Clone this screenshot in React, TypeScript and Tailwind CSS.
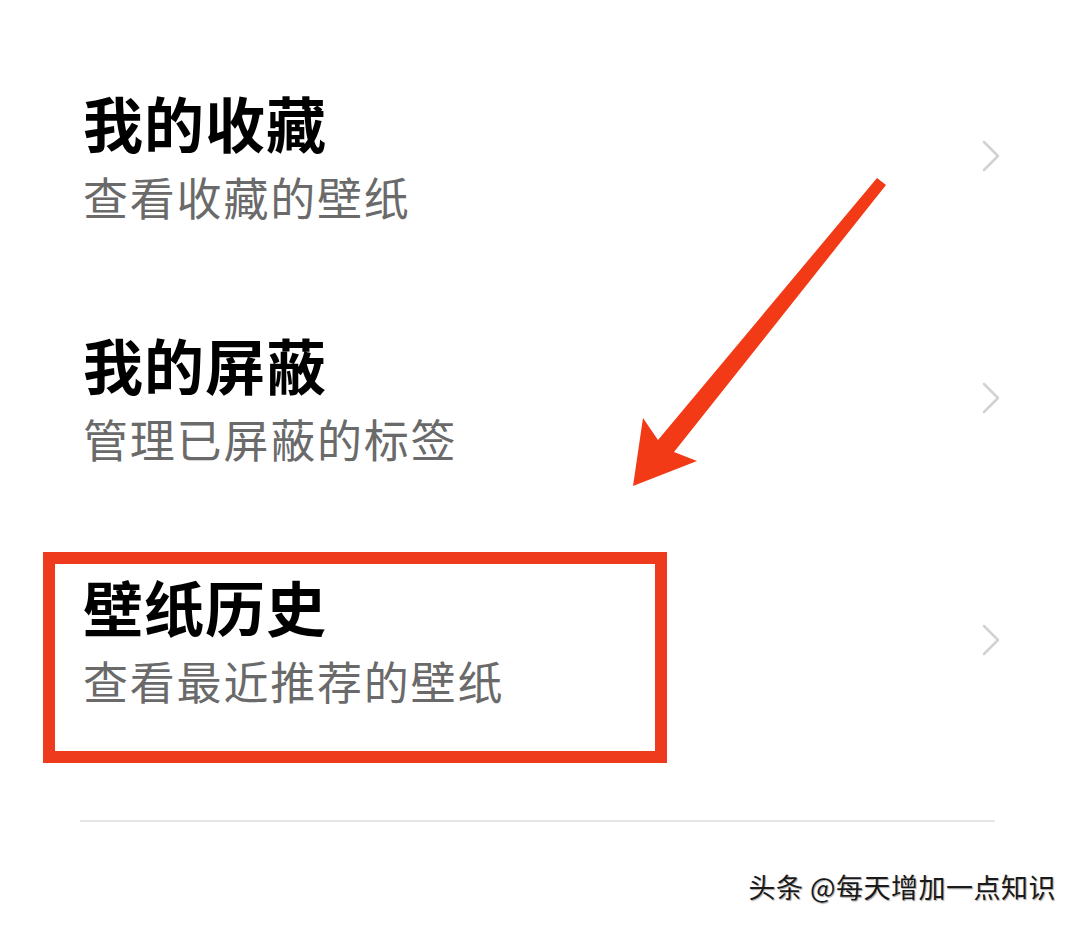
const FONT = '[font-family:"Noto_Sans_CJK_SC","Noto_Sans",sans-serif]';

const items = [
  { title: '我的收藏', desc: '查看收藏的壁纸' },
  { title: '我的屏蔽', desc: '管理已屏蔽的标签' },
  { title: '壁纸历史', desc: '查看最近推荐的壁纸', marked: true },
];

function Chevron() {
  return (
    <svg width="22" height="34" viewBox="0 0 22 34" fill="none" className="shrink-0">
      <path d="M4 3 L18 17 L4 31" stroke="#d2d2d2" strokeWidth="2.5" strokeLinecap="round" strokeLinejoin="round" />
    </svg>
  );
}

function Row({ title, desc, marked }: { title: string; desc: string; marked?: boolean }) {
  return (
    <div className="relative flex items-center justify-between">
      <div className="flex flex-col">
        <p className="text-[60px] leading-[60px] font-bold text-black tracking-[1px]">{title}</p>
        <p className="mt-[22px] text-[45px] leading-[46px] text-[#6a6a6a] tracking-[1.8px]">{desc}</p>
      </div>
      <Chevron />
      {marked && (
        <div className="pointer-events-none absolute -left-[40px] -top-[24px] h-[211px] w-[624px] border-[12px] border-[#ee3a1d]" />
      )}
    </div>
  );
}

export default function App() {
  return (
    <div className={`relative h-[928px] w-[1080px] overflow-hidden bg-white ${FONT}`}>
      <div className="flex flex-col gap-[114px] pl-[83px] pr-[78px] pt-[92px]">
        {items.map((it) => (
          <Row key={it.title} {...it} />
        ))}
      </div>

      <div className="ml-[80px] mr-[85px] mt-[116px] h-[2px] bg-[#e6e6e6]" />

      <svg
        className="pointer-events-none absolute left-0 top-0"
        width="1080"
        height="928"
        viewBox="0 0 1080 928"
      >
        <path d="M877 178 L886 185 L674 452 L697 461 L633 486 L643 418 L658 440 Z" fill="#f23a17" />
      </svg>

      <p className="absolute right-[24px] top-[869px] text-[27px] leading-[36px] tracking-[0.5px] text-[#1a1a1a] [text-shadow:-1px_0_0_#fff,1px_1px_1px_rgba(0,0,0,0.35)]">
        头条 @每天增加一点知识
      </p>
    </div>
  );
}
